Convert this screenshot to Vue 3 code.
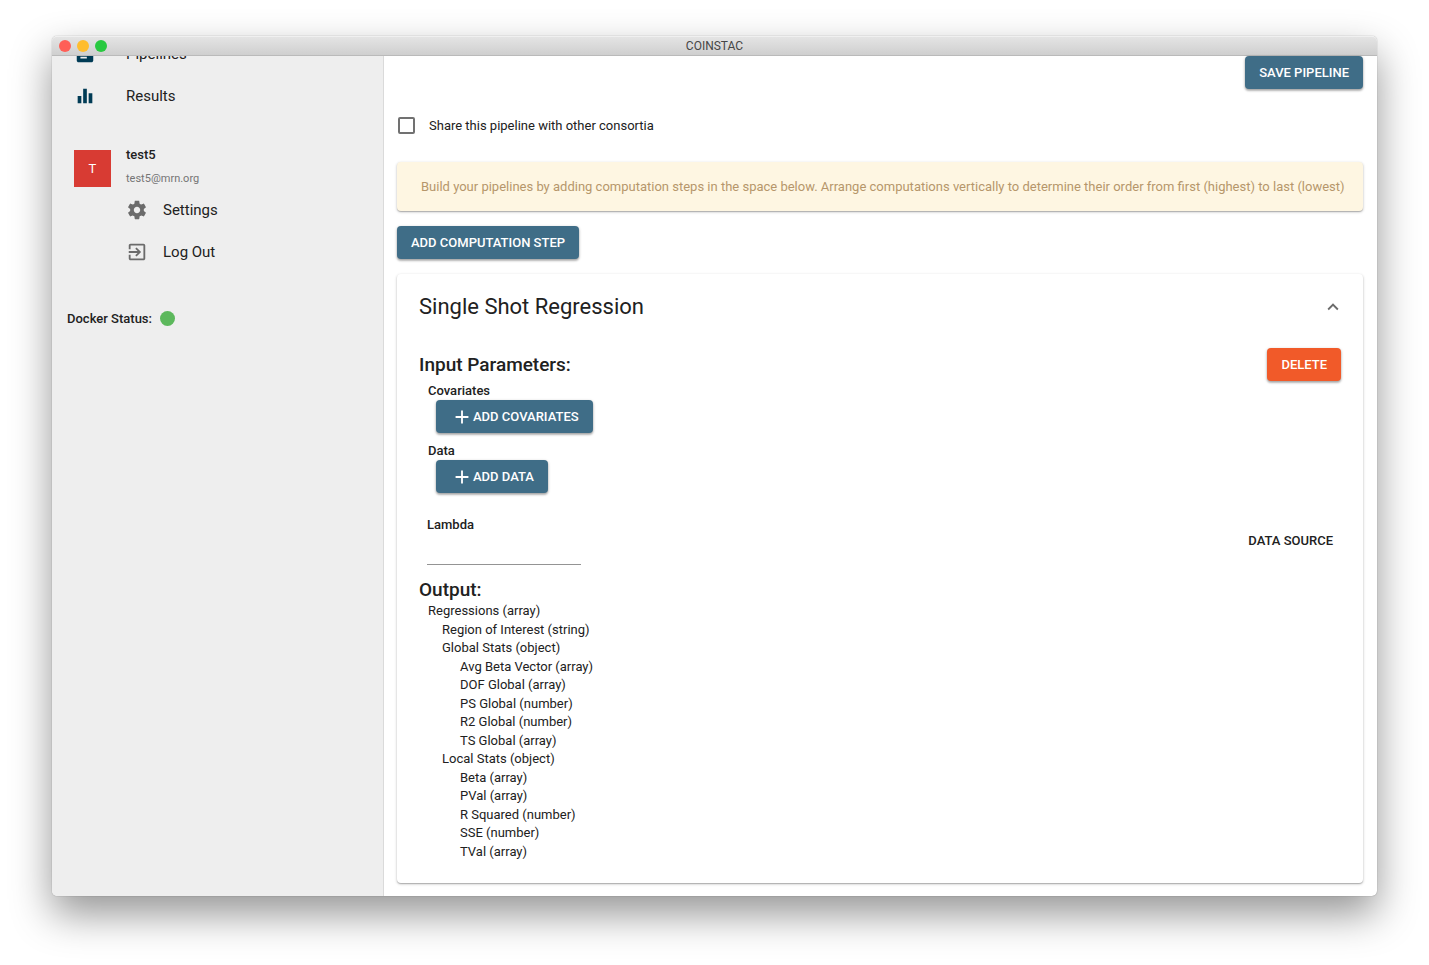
<script setup>
import { ref } from 'vue'

const shared = ref(false)
const lambda = ref('')
const open = ref(true)

const inputs = [
  { label: 'Covariates', action: 'Add Covariates' },
  { label: 'Data', action: 'Add Data' }
]

const outputs = [
  { level: 0, text: 'Regressions (array)' },
  { level: 1, text: 'Region of Interest (string)' },
  { level: 1, text: 'Global Stats (object)' },
  { level: 2, text: 'Avg Beta Vector (array)' },
  { level: 2, text: 'DOF Global (array)' },
  { level: 2, text: 'PS Global (number)' },
  { level: 2, text: 'R2 Global (number)' },
  { level: 2, text: 'TS Global (array)' },
  { level: 1, text: 'Local Stats (object)' },
  { level: 2, text: 'Beta (array)' },
  { level: 2, text: 'PVal (array)' },
  { level: 2, text: 'R Squared (number)' },
  { level: 2, text: 'SSE (number)' },
  { level: 2, text: 'TVal (array)' }
]
</script>

<template>
  <div class="desktop">
    <div class="window">
      <header class="titlebar">
        <div class="lights">
          <span class="light red"></span>
          <span class="light yellow"></span>
          <span class="light green"></span>
        </div>
        <span class="window-title">COINSTAC</span>
      </header>

      <div class="body">
        <aside class="sidebar">
          <nav class="nav">
            <a href="#pipelines" class="nav-item">
              <svg class="icon navy" viewBox="0 0 24 24"><path d="M19 3h-4.180C14.400 1.840 13.300 1 12 1c-1.300 0-2.400.84-2.820 2H5c-1.100 0-2 .9-2 2v14c0 1.100.9 2 2 2h14c1.100 0 2-.9 2-2V5c0-1.100-.9-2-2-2zm-5 14H7v-2h7v2zm3-4H7v-2h10v2zm0-4H7V7h10v2z" /></svg>
              <span>Pipelines</span>
            </a>
            <a href="#results" class="nav-item">
              <svg class="icon navy" viewBox="0 0 24 24"><path d="M10 20h4V4h-4v16zm-6 0h4v-8H4v8zM16 9v11h4V9h-4z" /></svg>
              <span>Results</span>
            </a>
          </nav>

          <section class="user">
            <div class="avatar">T</div>
            <div class="user-info">
              <strong class="user-name">test5</strong>
              <span class="user-mail">test5@mrn.org</span>
              <a href="#settings" class="user-link">
                <svg class="icon grey" viewBox="0 0 24 24"><path d="M19.430 12.980c.04-.32.07-.64.07-.98s-.03-.66-.07-.98l2.110-1.650c.19-.15.24-.42.12-.64l-2-3.460c-.12-.22-.39-.3-.61-.22l-2.490 1c-.52-.4-1.080-.73-1.690-.98l-.38-2.650C14.460 2.180 14.250 2 14 2h-4c-.25 0-.46.18-.49.42l-.38 2.650c-.61.25-1.170.59-1.690.98l-2.490-1c-.23-.09-.49 0-.61.22l-2 3.460c-.13.22-.07.49.12.64l2.110 1.650c-.04.32-.07.65-.07.98s.03.66.07.98l-2.110 1.650c-.19.15-.24.42-.12.64l2 3.460c.12.22.39.3.61.22l2.490-1c.52.4 1.080.73 1.690.98l.38 2.650c.03.24.24.42.49.42h4c.25 0 .46-.18.49-.42l.38-2.650c.61-.25 1.170-.59 1.690-.98l2.490 1c.23.09.49 0 .61-.22l2-3.460c.12-.22.07-.49-.12-.64l-2.110-1.650zM12 15.500c-1.930 0-3.500-1.570-3.500-3.500s1.570-3.500 3.500-3.500 3.500 1.570 3.500 3.500-1.570 3.500-3.500 3.500z" /></svg>
                <span>Settings</span>
              </a>
              <a href="#logout" class="user-link">
                <svg class="icon grey" viewBox="0 0 24 24"><path d="M10.090 15.590L11.500 17l5-5-5-5-1.410 1.410L12.670 11H3v2h9.670l-2.580 2.590zM19 3H5c-1.110 0-2 .9-2 2v4h2V5h14v14H5v-4H3v4c0 1.100.89 2 2 2h14c1.100 0 2-.9 2-2V5c0-1.100-.9-2-2-2z" /></svg>
                <span>Log Out</span>
              </a>
            </div>
          </section>

          <div class="docker">
            <span>Docker Status:</span>
            <span class="status-dot"></span>
          </div>
        </aside>

        <main class="main">
          <div class="save-row">
            <button type="button" class="btn">SAVE PIPELINE</button>
          </div>

          <label class="share">
            <input v-model="shared" type="checkbox" class="checkbox" />
            <span>Share this pipeline with other consortia</span>
          </label>

          <p class="notice">Build your pipelines by adding computation steps in the space below. Arrange computations vertically to determine their order from first (highest) to last (lowest)</p>

          <button type="button" class="btn">ADD COMPUTATION STEP</button>

          <section class="card">
            <header class="card-head">
              <h2 class="card-title">Single Shot Regression</h2>
              <button type="button" class="toggle" aria-label="Collapse step" :aria-expanded="open" @click="open = !open">
                <svg class="icon grey" viewBox="0 0 24 24"><path d="M16.590 15.410L12 10.830l-4.590 4.580L6 14l6-6 6 6z" /></svg>
              </button>
            </header>

            <div v-show="open">
              <div class="params-head">
                <h3 class="section-title">Input Parameters:</h3>
                <button type="button" class="btn danger">DELETE</button>
              </div>

              <div v-for="item in inputs" :key="item.label" class="param">
                <h4 class="param-label">{{ item.label }}</h4>
                <button type="button" class="btn with-icon">
                  <svg class="icon" viewBox="0 0 24 24"><path d="M19 13h-6v6h-2v-6H5v-2h6V5h2v6h6v2z" /></svg>
                  <span>{{ item.action.toUpperCase() }}</span>
                </button>
              </div>

              <div class="lambda-row">
                <div class="field">
                  <label for="lambda" class="field-label">Lambda</label>
                  <input id="lambda" v-model="lambda" type="text" class="field-input" />
                </div>
                <button type="button" class="btn flat">DATA SOURCE</button>
              </div>

              <h3 class="section-title">Output:</h3>
              <ul class="outputs">
                <li v-for="row in outputs" :key="row.text" :class="'level-' + row.level">{{ row.text }}</li>
              </ul>
            </div>
          </section>
        </main>
      </div>
    </div>
  </div>
</template>

<style>
body {
  margin: 0;
  background: #fff;
}
</style>

<style scoped>
* {
  box-sizing: border-box;
}

.desktop {
  display: flex;
  min-height: 100vh;
  padding: 36px 52px 69px;
  overflow: hidden;
  font-family: Roboto, "Liberation Sans", sans-serif;
  font-size: 13px;
  line-height: 19px;
  color: #212121;
}

.window {
  display: flex;
  flex: 1;
  flex-direction: column;
  min-width: 0;
  border-radius: 5px;
  background: #fff;
  box-shadow: 0 0 1px rgba(0, 0, 0, 0.5), 0 18px 40px rgba(0, 0, 0, 0.42);
}

.titlebar {
  display: grid;
  grid-template-columns: 1fr auto 1fr;
  align-items: center;
  height: 20px;
  padding: 0 7px;
  border-top: 1px solid #f0f0f0;
  border-bottom: 1px solid #bababa;
  border-radius: 5px 5px 0 0;
  background: linear-gradient(#e4e4e4, #cfcfcf);
}

.lights {
  display: flex;
  gap: 6px;
}

.light {
  width: 12px;
  height: 12px;
  border-radius: 50%;
}

.red { background: #ff5f57; }
.yellow { background: #ffbd2e; }
.green { background: #28c940; }

.window-title {
  font-size: 12px;
  line-height: 18px;
  color: #464646;
}

.body {
  display: flex;
  flex: 1;
  min-height: 0;
}

.sidebar {
  flex: 0 0 332px;
  overflow: hidden;
  border-right: 1px solid #dadada;
  border-radius: 0 0 0 5px;
  background: #eee;
}

.icon {
  flex: none;
  display: block;
  width: 22px;
  height: 22px;
  fill: currentColor;
}

.navy { color: #003b55; }
.grey { color: #6b6b6b; }

.nav {
  margin-top: -23px;
}

.nav-item,
.user-link {
  display: flex;
  align-items: center;
  height: 42px;
  font-size: 15px;
  color: #212121;
  text-decoration: none;
}

.nav-item {
  gap: 30px;
  padding-left: 22px;
}

.user {
  display: flex;
  gap: 15px;
  padding: 28px 22px 0;
}

.avatar {
  flex: none;
  width: 37px;
  height: 37px;
  margin-top: 5px;
  background: #d83b33;
  color: #fff;
  line-height: 37px;
  text-align: center;
}

.user-info {
  display: flex;
  flex-direction: column;
}

.user-name {
  font-weight: 500;
}

.user-mail {
  margin: 5px 0 1px;
  font-size: 11px;
  color: #757575;
}

.user-link {
  gap: 15px;
}

.docker {
  display: flex;
  align-items: center;
  gap: 8px;
  margin-top: 36px;
  padding-left: 15px;
  font-weight: 500;
}

.status-dot {
  width: 15px;
  height: 15px;
  border-radius: 50%;
  background: #5cb85c;
}

.main {
  flex: 1;
  min-width: 0;
  padding: 0 14px 13px 13px;
}

.btn {
  height: 33px;
  padding: 0 14px;
  border: 0;
  border-radius: 4px;
  background: #3f6d87;
  box-shadow: 0 1px 3px rgba(0, 0, 0, 0.3), 0 2px 2px rgba(0, 0, 0, 0.16);
  color: #fff;
  font: 500 13px/19px Roboto, "Liberation Sans", sans-serif;
  cursor: pointer;
}

.save-row {
  display: flex;
  justify-content: flex-end;
}

.share {
  display: flex;
  align-items: center;
  gap: 14px;
  width: max-content;
  margin-top: 27px;
}

.checkbox {
  appearance: none;
  width: 17px;
  height: 17px;
  margin: 0 0 0 1px;
  border: 2px solid #717171;
  border-radius: 2px;
  background: #fff;
}

.checkbox:checked {
  background: #3f6d87;
}

.notice {
  margin: 27px 0 15px;
  padding: 15px 12px 15px 24px;
  border-radius: 4px;
  background: #fef6e2;
  box-shadow: 0 1px 3px rgba(0, 0, 0, 0.24), 0 1px 1px rgba(0, 0, 0, 0.18);
  color: #b6966b;
}

.card {
  margin-top: 15px;
  padding: 0 22px 22px;
  border-radius: 4px;
  background: #fff;
  box-shadow: 0 1px 3px rgba(0, 0, 0, 0.24), 0 1px 1px rgba(0, 0, 0, 0.18);
}

.card-head {
  display: flex;
  align-items: center;
  justify-content: space-between;
  height: 66px;
}

.card-title {
  margin: 0;
  font-size: 22px;
  font-weight: 400;
  line-height: 30px;
}

.toggle {
  margin-right: -3px;
  padding: 0;
  border: 0;
  background: none;
  cursor: pointer;
}

.params-head {
  display: flex;
  align-items: center;
  justify-content: space-between;
  padding-top: 8px;
}

.section-title {
  margin: 0;
  font-size: 19px;
  font-weight: 500;
  line-height: 22px;
}

.danger {
  background: #f15a29;
}

.param {
  padding: 0 0 8px 9px;
}

.param-label {
  margin: 0;
  font-size: 13px;
  font-weight: 500;
}

.with-icon {
  display: flex;
  align-items: center;
  margin-left: 8px;
  padding-left: 15px;
}

.lambda-row {
  display: flex;
  align-items: center;
  justify-content: space-between;
  margin: 14px 0;
  padding: 0 8px;
}

.field {
  display: flex;
  flex-direction: column;
}

.field-label {
  font-weight: 500;
}

.field-input {
  width: 154px;
  height: 31px;
  padding: 0;
  border: 0;
  border-bottom: 1px solid #949494;
  background: none;
  font: 13px/19px Roboto, "Liberation Sans", sans-serif;
}

.flat {
  padding: 0;
  background: none;
  box-shadow: none;
  color: #212121;
}

.outputs {
  display: grid;
  grid-auto-rows: 1fr;
  align-items: center;
  min-height: 259px;
  margin: 1px 0 0;
  padding: 0 0 0 9px;
  line-height: 18px;
  list-style: none;
}

.level-1 { padding-left: 14px; }
.level-2 { padding-left: 32px; }
</style>
